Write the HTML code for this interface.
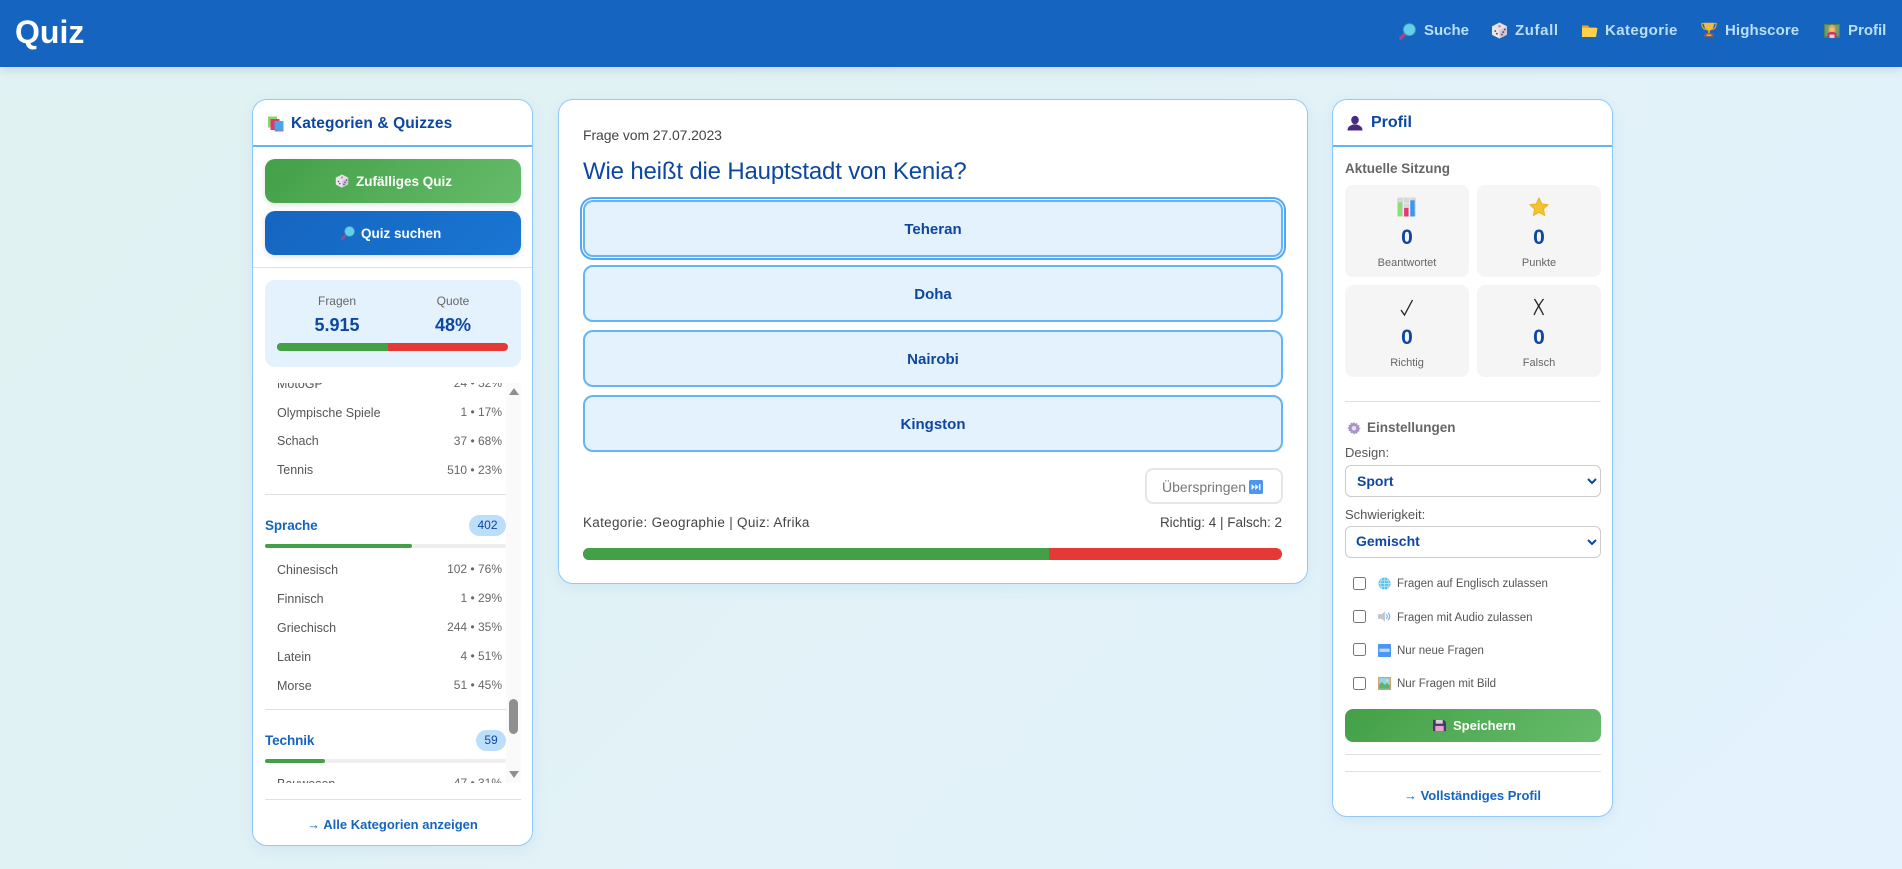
<!DOCTYPE html>
<html lang="de">
<head>
<meta charset="utf-8">
<title>Quiz</title>
<style>
html,body{margin:0;padding:0;width:1902px;height:869px;overflow:hidden}
body{position:relative;font-family:"Liberation Sans",sans-serif;background:linear-gradient(135deg,#e0f2f1 0%,#e3f2fd 100%);color:#333}
*{box-sizing:border-box}
.a,.t,.i{position:absolute}
.t{white-space:nowrap;line-height:20px;height:20px}
.c{text-align:center}
.r{text-align:right}
.b{font-weight:bold}
svg{display:block;overflow:visible}
.i{display:block}
.hdr{left:0;top:0;width:1902px;height:67px;background:#1565c0;box-shadow:0 2px 10px rgba(0,0,0,.13)}
.nav{color:#bbdefb;font-weight:bold;font-size:15px;top:21px}
.panel{background:#fff;border:1px solid #90caf9;border-radius:15px;box-shadow:0 4px 15px rgba(21,101,192,.08)}
.hl{height:1px;background:#e0e0e0}
.blue{height:2px;background:#64b5f6}
.ttl{color:#0d47a1;font-weight:bold;font-size:15.5px;letter-spacing:.1px}
.btn{border-radius:10px;box-shadow:0 2px 6px rgba(0,0,0,.12)}
.g{background:linear-gradient(135deg,#43a047,#66bb6a)}
.bl{background:linear-gradient(135deg,#1565c0,#1976d2)}
.bt{color:#fff;font-weight:bold;font-size:13.5px}
.row{font-size:12.5px;color:#555}
.num{font-size:12px;color:#666}
.cat{font-size:13.5px;font-weight:bold;color:#1565c0;letter-spacing:-.1px}
.badge{background:#bbdefb;color:#0d47a1;border-radius:11px;font-size:12px;text-align:center;line-height:21px;height:21px}
.trk{height:4px;background:#eee;border-radius:2px;left:265px;width:241px}
.fil{height:4px;background:#43a047;border-radius:2px;left:0;top:0}
.ans{left:583px;width:700px;height:57px;background:#e3f2fd;border:2px solid #64b5f6;border-radius:10px;color:#0d47a1;font-weight:bold;font-size:15px;text-align:center;line-height:55px}
.tile{background:#f5f5f5;border-radius:8px;width:124px;height:92px}
.sn{color:#0d47a1;font-weight:bold;font-size:21px;width:124px}
.sl{color:#666;font-size:11px;width:124px}
.sel{left:1345px;width:256px;height:32px;border:1px solid #ccc;border-radius:6px;background:#fff}
.seltxt{color:#0d47a1;font-weight:bold;font-size:14px}
.lab{color:#555;font-size:13px}
.cb{left:1353px;width:13px;height:13px;border:1px solid #767676;border-radius:2.5px;background:#fff}
.ct{color:#555;font-size:11.5px;left:1397px}
.lnk{color:#1565c0;font-weight:bold;font-size:13px}
.strip{left:252px;width:281px}
</style>
</head>
<body>
<svg width="0" height="0" style="position:absolute">
<defs>
<symbol id="mag" viewBox="0 0 16 16">
<path d="M6 10 L1.500 14.500" stroke="#a04a8a" stroke-width="3" stroke-linecap="round"/>
<circle cx="9.800" cy="6.200" r="5.600" fill="#63d0ea" stroke="#4b9fc0" stroke-width=".8"/>
</symbol>
<symbol id="dice" viewBox="0 0 16 16">
<path d="M8 .5 15 4v8l-7 3.500L1 12V4z" fill="#e4e0e6"/>
<path d="M8 8 15 4v8l-7 3.500z" fill="#cfc8d4"/>
<path d="M1 4 8 8v7.500L1 12z" fill="#ebe7ec"/>
<circle cx="8" cy="4" r="1.100" fill="#e06a70"/>
<circle cx="4" cy="8.500" r=".9" fill="#5c4a78"/><circle cx="5.500" cy="11" r=".9" fill="#5c4a78"/>
<circle cx="10.300" cy="11.800" r=".9" fill="#5c4a78"/><circle cx="11.500" cy="9.500" r=".9" fill="#5c4a78"/><circle cx="13" cy="7" r=".9" fill="#5c4a78"/>
</symbol>
<symbol id="folder" viewBox="0 0 16 16">
<path d="M0 2.500h6l1.600 2H14v2H0z" fill="#f5a623"/>
<path d="M0 14V5h15.500L14 14z" fill="#ffd04d"/>
</symbol>
<symbol id="trophy" viewBox="0 0 16 16">
<path d="M3 1.500H.8c0 4 1.500 5.500 4 6M13 1.500h2.200c0 4-1.500 5.500-4 6" fill="none" stroke="#e8a020" stroke-width="1.200"/>
<path d="M3 .8h10c0 5-1.600 7.700-5 8-3.400-.3-5-3-5-8z" fill="#f6b93b"/>
<rect x="7" y="8.500" width="2" height="3" fill="#e0962a"/>
<rect x="3.500" y="11.200" width="9" height="4" rx=".6" fill="#8d5a4a"/>
<rect x="5.500" y="12.500" width="5" height="1.300" fill="#f6c445"/>
</symbol>
<symbol id="pers" viewBox="0 0 16 16">
<rect x="0" y="1" width="16" height="14" fill="#4f7f5c"/>
<rect x="1" y="2" width="14" height="11" fill="#6d9e6f"/>
<circle cx="8" cy="5" r="3.300" fill="#e6a84a"/>
<path d="M4.500 4h7v6h-7z" fill="#e6a84a"/>
<circle cx="8" cy="6.500" r="2" fill="#f0c080"/>
<path d="M3.500 15v-4c0-1 2-2 4.500-2s4.500 1 4.500 2v4z" fill="#c2336a"/>
<rect x="5.500" y="11.500" width="5" height="3.500" fill="#f3c3c9"/>
</symbol>
<symbol id="books" viewBox="0 0 16 16">
<rect x="0" y="0.500" width="9" height="11" fill="#8bd66a"/>
<rect x="2.500" y="3" width="9" height="11" fill="#e8336d"/>
<rect x="6.500" y="5" width="9" height="10.500" fill="#45a7ea"/>
<rect x="6.500" y="13" width="9" height="2.500" fill="#8e7fd6"/>
</symbol>
<symbol id="bust" viewBox="0 0 16 16">
<ellipse cx="8" cy="5" rx="3.800" ry="4.300" fill="#4a2a80"/>
<path d="M.5 15.500c0-4 3-5 5.500-6h4c2.500 1 5.500 2 5.500 6z" fill="#4a2a80"/>
</symbol>
<symbol id="chart" viewBox="0 0 20 20">
<rect x="0" y="0" width="20" height="20" rx="2" fill="#d7d7de"/>
<path d="M6.700 0v20M13.300 0v20M0 6h20M0 13h20" stroke="#eeeef2" stroke-width=".8"/>
<rect x="1" y="5" width="4.600" height="15" fill="#8fdc7a"/>
<rect x="7.500" y="11" width="4.600" height="9" fill="#ea3574"/>
<rect x="14" y="3" width="4.600" height="17" fill="#3a98e8"/>
</symbol>
<symbol id="star" viewBox="0 0 20 20">
<path d="M10 .8l2.800 6 6.500.8-4.800 4.500 1.300 6.500L10 15.400 4.200 18.600l1.300-6.500L.7 7.600l6.500-.8z" fill="#f2c230" stroke="#e8b020" stroke-width=".8" stroke-linejoin="round"/>
</symbol>
<symbol id="gear" viewBox="0 0 16 16">
<path d="M8 1l1.300 2 2.300-.7.400 2.400 2.400.4-.7 2.300 2 1.300-2 1.300.7 1.700-2.400.7-.4 2.300-2.300-.7L8 15.500l-1.300-2-2.300.7-.4-2.300-2.400-.7.7-1.700-2-1.300 2-1.300-.7-2.300 2.400-.4.400-2.400 2.300.7z" fill="#a894c8"/>
<circle cx="8" cy="8.300" r="2.600" fill="#e8e2f0"/>
</symbol>
<symbol id="globe" viewBox="0 0 14 14">
<circle cx="7" cy="7" r="6.500" fill="#5cc2ee"/>
<path d="M.5 7h13M1.500 4h11M1.500 10h11M7 .5v13M4 1.500c-1.500 3.500-1.500 7.500 0 11M10 1.500c1.500 3.500 1.500 7.500 0 11" stroke="#c6ecfa" stroke-width=".7" fill="none"/>
</symbol>
<symbol id="spk" viewBox="0 0 14 14">
<path d="M0 4.500h4l3.500-3v11L4 9.500H0z" fill="#c5c5cd"/>
<path d="M9 4.500c1.200 1.500 1.200 3.500 0 5M11 3c2 2.500 2 5.500 0 8" fill="none" stroke="#5aa6ee" stroke-width="1.100"/>
</symbol>
<symbol id="new" viewBox="0 0 14 14">
<rect width="14" height="14" rx="1" fill="#4a96f0"/>
<rect x="1.500" y="5" width="11" height="3.500" fill="#bcd9fa"/>
</symbol>
<symbol id="pic" viewBox="0 0 14 14">
<rect width="14" height="14" fill="#d9a06f"/>
<rect x="1.300" y="1.300" width="11.400" height="11.400" fill="#8fd7f0"/>
<path d="M1.300 12.700V8l3-2.500 3 3 2.500-2 2.900 2.500v3.700z" fill="#5db46a"/>
<circle cx="9.800" cy="3.800" r="1.200" fill="#fbe07a"/>
</symbol>
<symbol id="disk" viewBox="0 0 14 14">
<path d="M0 1h11.500L14 3.500V13H0z" fill="#52356e"/>
<rect x="3" y="1" width="7.500" height="4" fill="#d6d0de"/>
<rect x="2.500" y="7.500" width="9" height="5.500" fill="#e9a3c8"/>
</symbol>
<symbol id="skip" viewBox="0 0 14 14">
<rect width="14" height="14" rx="1.500" fill="#4a96f0"/>
<path d="M2.500 4l3.500 3-3.500 3zM6.200 4l3.500 3-3.500 3z" fill="#e6f1fd"/>
<rect x="10" y="4" width="1.500" height="6" fill="#e6f1fd"/>
</symbol>
</defs>
</svg>

<div class="a hdr"></div>
<div class="t b" style="left:15px;top:20px;font-size:32px;line-height:24px;height:24px;color:#fff">Quiz</div>
<svg class="i" style="left:1399px;top:23px" width="17" height="17"><use href="#mag"/></svg>
<div class="t nav" style="left:1424px">Suche</div>
<svg class="i" style="left:1491px;top:22px" width="17" height="17"><use href="#dice"/></svg>
<div class="t nav" style="left:1515px;letter-spacing:.6px">Zufall</div>
<svg class="i" style="left:1582px;top:23px" width="16" height="16"><use href="#folder"/></svg>
<div class="t nav" style="left:1605px;letter-spacing:.4px">Kategorie</div>
<svg class="i" style="left:1701px;top:22px" width="16" height="16"><use href="#trophy"/></svg>
<div class="t nav" style="left:1725px;letter-spacing:.1px">Highscore</div>
<svg class="i" style="left:1824px;top:23px" width="16" height="16"><use href="#pers"/></svg>
<div class="t nav" style="left:1848px">Profil</div>

<!-- Left panel -->
<div class="a panel" style="left:252px;top:99px;width:281px;height:747px"></div>
<div class="a blue" style="left:253px;top:145px;width:279px"></div>
<svg class="i" style="left:268px;top:116px" width="16" height="16"><use href="#books"/></svg>
<div class="t ttl" style="left:291px;top:114px">Kategorien &amp; Quizzes</div>
<div class="a btn g" style="left:265px;top:159px;width:256px;height:44px"></div>
<svg class="i" style="left:335px;top:174px" width="14" height="14"><use href="#dice"/></svg>
<div class="t bt" style="left:356px;top:172px">Zufälliges Quiz</div>
<div class="a btn bl" style="left:265px;top:211px;width:256px;height:44px"></div>
<svg class="i" style="left:341px;top:226px" width="14" height="14"><use href="#mag"/></svg>
<div class="t bt" style="left:361px;top:224px">Quiz suchen</div>
<div class="a hl" style="left:253px;top:267px;width:279px"></div>
<div class="a" style="left:265px;top:280px;width:256px;height:87px;background:#e3f2fd;border-radius:10px"></div>
<div class="t c" style="left:277px;width:120px;top:291px;font-size:12px;color:#666">Fragen</div>
<div class="t c" style="left:393px;width:120px;top:291px;font-size:12px;color:#666">Quote</div>
<div class="t c b" style="left:277px;width:120px;top:315px;font-size:18px;color:#0d47a1">5.915</div>
<div class="t c b" style="left:393px;width:120px;top:315px;font-size:18px;color:#0d47a1">48%</div>
<div class="a" style="left:277px;top:343px;width:231px;height:8px;border-radius:4px;overflow:hidden;background:#e53935"><div class="a" style="left:0;top:0;width:111px;height:8px;background:#43a047"></div></div>

<div class="a" style="left:265px;top:383px;width:256px;height:400px;overflow:hidden">
  <div class="t row" style="left:12px;top:-9px">MotoGP</div><div class="t num r" style="right:19px;top:-10px">24 • 32%</div>
  <div class="t row" style="left:12px;top:20px">Olympische Spiele</div><div class="t num r" style="right:19px;top:19px">1 • 17%</div>
  <div class="t row" style="left:12px;top:48px">Schach</div><div class="t num r" style="right:19px;top:48px">37 • 68%</div>
  <div class="t row" style="left:12px;top:77px">Tennis</div><div class="t num r" style="right:19px;top:77px">510 • 23%</div>
  <div class="a hl" style="left:0;top:111px;width:241px"></div>
  <div class="t cat" style="left:0;top:133px">Sprache</div>
  <div class="a badge" style="left:204px;top:132px;width:37px">402</div>
  <div class="a trk" style="left:0;top:161px"><div class="a fil" style="width:147px"></div></div>
  <div class="t row" style="left:12px;top:177px">Chinesisch</div><div class="t num r" style="right:19px;top:176px">102 • 76%</div>
  <div class="t row" style="left:12px;top:206px">Finnisch</div><div class="t num r" style="right:19px;top:205px">1 • 29%</div>
  <div class="t row" style="left:12px;top:235px">Griechisch</div><div class="t num r" style="right:19px;top:234px">244 • 35%</div>
  <div class="t row" style="left:12px;top:264px">Latein</div><div class="t num r" style="right:19px;top:263px">4 • 51%</div>
  <div class="t row" style="left:12px;top:293px">Morse</div><div class="t num r" style="right:19px;top:292px">51 • 45%</div>
  <div class="a hl" style="left:0;top:326px;width:241px"></div>
  <div class="t cat" style="left:0;top:348px">Technik</div>
  <div class="a badge" style="left:211px;top:347px;width:30px">59</div>
  <div class="a trk" style="left:0;top:376px"><div class="a fil" style="width:60px"></div></div>
  <div class="t row" style="left:12px;top:391px">Bauwesen</div><div class="t num r" style="right:19px;top:390px">47 • 31%</div>
  <div class="a" style="left:241px;top:0;width:15px;height:400px;background:#fafafa"></div>
  <svg class="i" style="left:244px;top:5px" width="10" height="7"><path d="M5 0l5 7H0z" fill="#8f8f8f"/></svg>
  <div class="a" style="left:244px;top:316px;width:9px;height:35px;border-radius:4.500px;background:#8f8f8f"></div>
  <svg class="i" style="left:244px;top:388px" width="10" height="7"><path d="M0 0h10L5 7z" fill="#8f8f8f"/></svg>
</div>
<div class="a hl" style="left:265px;top:799px;width:256px"></div>
<div class="t c lnk" style="left:252px;width:281px;top:815px">→ Alle Kategorien anzeigen</div>

<!-- Centre panel -->
<div class="a panel" style="left:558px;top:99px;width:750px;height:485px"></div>
<div class="t" style="left:583px;top:125px;font-size:14px;letter-spacing:-.1px;color:#444">Frage vom 27.07.2023</div>
<div class="t" style="left:583px;top:162px;font-size:24px;letter-spacing:-.17px;color:#0d47a1">Wie heißt die Hauptstadt von Kenia?</div>
<div class="a ans" style="top:200px;box-shadow:0 0 0 1px #fff,0 0 0 3px #4fa8f5">Teheran</div>
<div class="a ans" style="top:265px">Doha</div>
<div class="a ans" style="top:330px">Nairobi</div>
<div class="a ans" style="top:395px">Kingston</div>
<div class="a" style="left:1145px;top:468px;width:138px;height:36px;border:2px solid #e6e6e6;border-radius:8px;background:#fff"></div>
<div class="t" style="left:1162px;top:477px;font-size:14px;color:#777">Überspringen</div>
<svg class="i" style="left:1249px;top:480px" width="14" height="14"><use href="#skip"/></svg>
<div class="t" style="left:583px;top:513px;font-size:13.500px;letter-spacing:.3px;color:#444">Kategorie: Geographie | Quiz: Afrika</div>
<div class="t r" style="right:620px;top:513px;font-size:13.500px;color:#444">Richtig: 4 | Falsch: 2</div>
<div class="a" style="left:583px;top:548px;width:699px;height:12px;border-radius:6px;overflow:hidden;background:#e53935"><div class="a" style="left:0;top:0;width:466px;height:12px;background:#43a047"></div></div>

<!-- Right panel -->
<div class="a panel" style="left:1332px;top:99px;width:281px;height:718px"></div>
<div class="a blue" style="left:1333px;top:145px;width:279px"></div>
<svg class="i" style="left:1347px;top:115px" width="16" height="16"><use href="#bust"/></svg>
<div class="t ttl" style="left:1371px;top:113px;font-size:16px;letter-spacing:0">Profil</div>
<div class="t b" style="left:1345px;top:159px;font-size:13.500px;color:#666">Aktuelle Sitzung</div>

<div class="a tile" style="left:1345px;top:185px"></div>
<div class="a tile" style="left:1477px;top:185px"></div>
<div class="a tile" style="left:1345px;top:285px"></div>
<div class="a tile" style="left:1477px;top:285px"></div>
<svg class="i" style="left:1397px;top:197px" width="19" height="20"><use href="#chart"/></svg>
<svg class="i" style="left:1529px;top:197px" width="20" height="20"><use href="#star"/></svg>
<svg class="i" style="left:1400px;top:299px" width="14" height="18"><path d="M1 11 L4.500 16 L12.500 1" fill="none" stroke="#222" stroke-width="1.300"/></svg>
<svg class="i" style="left:1533px;top:298px" width="12" height="18"><path d="M1.500 1 Q6 8 10.500 17 M10.500 1 Q5 8 1 17" fill="none" stroke="#222" stroke-width="1.300"/></svg>
<div class="t c sn" style="left:1345px;top:228px">0</div>
<div class="t c sn" style="left:1477px;top:228px">0</div>
<div class="t c sn" style="left:1345px;top:328px">0</div>
<div class="t c sn" style="left:1477px;top:328px">0</div>
<div class="t c sl" style="left:1345px;top:253px">Beantwortet</div>
<div class="t c sl" style="left:1477px;top:253px">Punkte</div>
<div class="t c sl" style="left:1345px;top:353px">Richtig</div>
<div class="t c sl" style="left:1477px;top:353px">Falsch</div>

<div class="a hl" style="left:1345px;top:401px;width:256px"></div>
<svg class="i" style="left:1347px;top:421px" width="14" height="14"><use href="#gear"/></svg>
<div class="t b" style="left:1367px;top:418px;font-size:13.500px;color:#666">Einstellungen</div>
<div class="t lab" style="left:1345px;top:443px">Design:</div>
<div class="a sel" style="top:465px"></div>
<div class="t seltxt" style="left:1357px;top:471px">Sport</div>
<svg class="i" style="left:1587px;top:478px" width="10" height="7"><path d="M1 1l4 4 4-4" fill="none" stroke="#0d47a1" stroke-width="2"/></svg>
<div class="t lab" style="left:1345px;top:505px">Schwierigkeit:</div>
<div class="a sel" style="top:526px"></div>
<div class="t seltxt" style="left:1356px;top:531px">Gemischt</div>
<svg class="i" style="left:1587px;top:539px" width="10" height="7"><path d="M1 1l4 4 4-4" fill="none" stroke="#0d47a1" stroke-width="2"/></svg>

<div class="a cb" style="top:577px"></div>
<svg class="i" style="left:1378px;top:577px" width="13" height="13"><use href="#globe"/></svg>
<div class="t ct" style="top:574px">Fragen auf Englisch zulassen</div>
<div class="a cb" style="top:610px"></div>
<svg class="i" style="left:1378px;top:610px" width="13" height="13"><use href="#spk"/></svg>
<div class="t ct" style="top:608px">Fragen mit Audio zulassen</div>
<div class="a cb" style="top:643px"></div>
<svg class="i" style="left:1378px;top:644px" width="13" height="13"><use href="#new"/></svg>
<div class="t ct" style="top:641px">Nur neue Fragen</div>
<div class="a cb" style="top:677px"></div>
<svg class="i" style="left:1378px;top:677px" width="13" height="13"><use href="#pic"/></svg>
<div class="t ct" style="top:674px">Nur Fragen mit Bild</div>

<div class="a g" style="left:1345px;top:709px;width:256px;height:33px;border-radius:8px"></div>
<svg class="i" style="left:1433px;top:719px" width="13" height="13"><use href="#disk"/></svg>
<div class="t bt" style="left:1453px;top:716px;font-size:13px">Speichern</div>
<div class="a hl" style="left:1345px;top:754px;width:256px"></div>
<div class="a hl" style="left:1345px;top:771px;width:256px"></div>
<div class="t c lnk" style="left:1332px;width:281px;top:786px">→ Vollständiges Profil</div>
</body>
</html>
